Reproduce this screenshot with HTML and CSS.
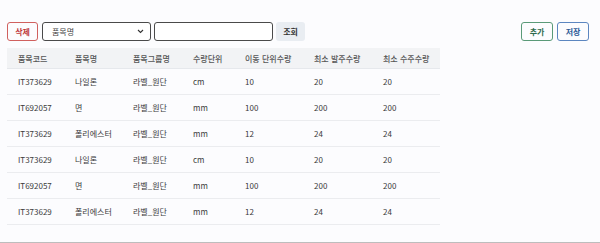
FILE: index.html
```html
<!DOCTYPE html>
<html lang="ko">
<head>
<meta charset="utf-8">
<link rel="stylesheet" href="styles.css">
</head>
<body>
<div class="page">
  <div class="toolbar">
    <div class="left">
      <button class="btn btn-del">삭제</button>
      <div class="select"><span>품목명</span>
        <svg width="7" height="5" viewBox="0 0 7 5"><path d="M1 1l2.5 2.5L6 1" fill="none" stroke="#333" stroke-width="1.1"/></svg>
      </div>
      <div class="input"></div>
      <button class="btn btn-search">조회</button>
    </div>
    <div class="right">
      <button class="btn btn-add">추가</button>
      <button class="btn btn-save">저장</button>
    </div>
  </div>
  <table class="grid">
    <colgroup>
      <col class="c1"><col class="c2"><col class="c3"><col class="c4"><col class="c5"><col class="c6"><col class="c7">
    </colgroup>
    <thead>
      <tr><th>품목코드</th><th>품목명</th><th>품목그룹명</th><th>수량단위</th><th>이동 단위수량</th><th>최소 발주수량</th><th>최소 수주수량</th></tr>
    </thead>
    <tbody>
      <tr><td>IT373629</td><td>나일론</td><td>라벨_원단</td><td>cm</td><td>10</td><td>20</td><td>20</td></tr>
      <tr><td>IT692057</td><td>면</td><td>라벨_원단</td><td>mm</td><td>100</td><td>200</td><td>200</td></tr>
      <tr><td>IT373629</td><td>폴리에스터</td><td>라벨_원단</td><td>mm</td><td>12</td><td>24</td><td>24</td></tr>
      <tr><td>IT373629</td><td>나일론</td><td>라벨_원단</td><td>cm</td><td>10</td><td>20</td><td>20</td></tr>
      <tr><td>IT692057</td><td>면</td><td>라벨_원단</td><td>mm</td><td>100</td><td>200</td><td>200</td></tr>
      <tr><td>IT373629</td><td>폴리에스터</td><td>라벨_원단</td><td>mm</td><td>12</td><td>24</td><td>24</td></tr>
    </tbody>
  </table>
</div>
</body>
</html>
```
FILE: styles.css
```css
html, body {
  margin: 0;
  padding: 0;
  background: #fcfcfe;
}
body {
  font-family: "Noto Sans CJK KR", "Noto Sans", sans-serif;
  color: #333;
}
.page {
  box-sizing: border-box;
  height: 243px;
  padding: 22px 11px 0 7px;
  border-bottom: 1px solid #bdbdbd;
}
.toolbar {
  display: flex;
  justify-content: space-between;
  align-items: center;
  height: 19px;
}
.left, .right {
  display: flex;
  align-items: center;
  gap: 4px;
}
.left { gap: 0; }
.btn {
  box-sizing: border-box;
  height: 19px;
  padding: 0;
  font-family: inherit;
  font-size: 8px;
  font-weight: 700;
  border-radius: 3px;
  background: transparent;
  line-height: 1;
}
.btn-del {
  width: 31px;
  border: 1px solid #d0605e;
  color: #c0393b;
  margin-right: 4px;
}
.select {
  box-sizing: border-box;
  width: 109px;
  height: 19px;
  border: 1px solid #4a4a4a;
  border-radius: 3px;
  display: flex;
  align-items: center;
  justify-content: space-between;
  padding: 0 6px 0 9px;
  font-size: 8px;
  color: #444;
  margin-right: 3px;
  background: #fff;
}
.input {
  box-sizing: border-box;
  width: 119px;
  height: 19px;
  border: 1px solid #4a4a4a;
  border-radius: 3px;
  background: #fff;
  margin-right: 3px;
}
.btn-search {
  width: 29px;
  border: none;
  background: #e9edf2;
  color: #333;
}
.btn-add {
  width: 32px;
  border: 1px solid #5a9a78;
  color: #2f6b4c;
}
.btn-save {
  width: 32px;
  border: 1px solid #5c86c0;
  color: #2e5a97;
}
.grid {
  margin-top: 7px;
  width: 433px;
  border-collapse: collapse;
  table-layout: fixed;
  font-size: 8px;
}
.c1 { width: 57px; }
.c2 { width: 58px; }
.c3 { width: 60px; }
.c4 { width: 52px; }
.c5 { width: 69px; }
.c6 { width: 69px; }
.c7 { width: 68px; }
.grid th {
  background: #f2f3f5;
  height: 20px;
  padding: 0 0 0 11px;
  text-align: left;
  font-weight: 500;
  color: #555;
  border-bottom: 1px solid #e6e8ec;
}
.grid td {
  height: 25px;
  padding: 0 0 0 11px;
  text-align: left;
  color: #3a3a3a;
  border-bottom: 1px solid #ebecef;
}
```
